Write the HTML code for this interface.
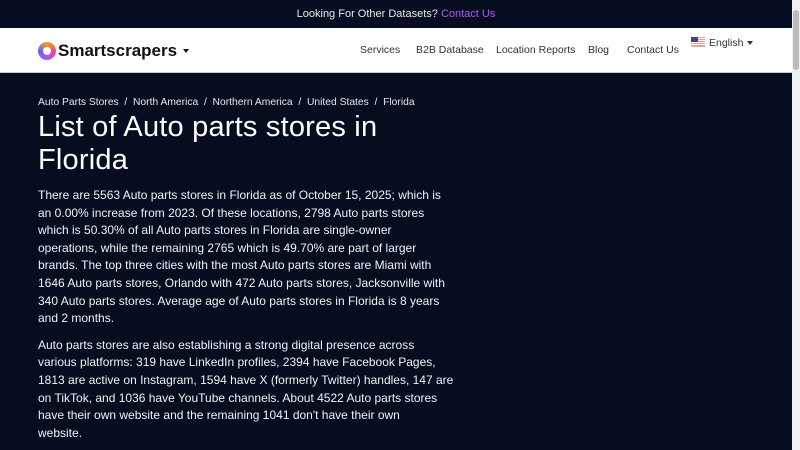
<!DOCTYPE html>
<html><head><meta charset="utf-8"><style>
*{margin:0;padding:0;box-sizing:border-box}
body{width:800px;height:450px;overflow:hidden;background:#070d20;font-family:"Liberation Sans",sans-serif;color:#fff;position:relative}
.top{height:28px;background:#070d20;text-align:center;font-size:11px;line-height:28px;color:#e8e8ee;padding-right:8px}
.top a{color:#a855f7;text-decoration:none}
.nav{position:absolute;top:28px;left:0;width:792px;height:45px;background:#fff;border-bottom:1px solid #ccc}
.logo{position:absolute;left:38px;top:13px;display:flex;align-items:center;color:#111;font-weight:bold;font-size:17px}
.ring{width:18px;height:18px;border-radius:50%;background:conic-gradient(#f59e0b,#ec4899,#a855f7,#6366f1,#f59e0b);position:relative;margin-right:2px}
.ring:after{content:"";position:absolute;left:5px;top:5px;width:8px;height:8px;border-radius:50%;background:#fff}
.nav .l{position:absolute;top:16px;font-size:10.5px;color:#333}
.car{display:inline-block;border-left:3.5px solid transparent;border-right:3.5px solid transparent;border-top:4px solid #333;vertical-align:middle;margin-left:4px}
.main{position:absolute;left:38px;top:97px;width:416px}
.bc{font-size:10.3px;color:#e5e7eb}
h1{font-weight:normal;font-size:29px;line-height:33px;margin-top:3px;letter-spacing:.2px}
p{font-size:12px;line-height:17.6px;margin-top:10px;color:#f1f1f4}
p+p{margin-top:9px}
.sb{position:absolute;right:0;top:0;width:8px;height:450px;background:#f0f0f0}
.sb div{margin:10px 1px;height:60px;background:#bbb;border-radius:3px}
</style></head><body>
<div class="top">Looking For Other Datasets? <a>Contact Us</a></div>
<div class="nav">
<div class="logo"><div class="ring"></div>Smartscrapers<span class="car" style="border-top-color:#111;margin-left:6px"></span></div>
<span class="l" style="left:360px">Services</span>
<span class="l" style="left:416px">B2B Database</span>
<span class="l" style="left:496px">Location Reports</span>
<span class="l" style="left:588px">Blog</span>
<span class="l" style="left:627px">Contact Us</span>
<span class="l" style="left:691px;top:9px"><svg width="14" height="10" style="vertical-align:-1px;margin-right:4px"><rect width="14" height="10" fill="#e8a0a0"/><rect y="1" width="14" height="1" fill="#fff"/><rect y="3" width="14" height="1" fill="#fff"/><rect y="5" width="14" height="1" fill="#fff"/><rect y="7" width="14" height="1" fill="#fff"/><rect width="7" height="5" fill="#3c4a80"/></svg>English<span class="car"></span></span>
</div>
<div class="main">
<div class="bc">Auto Parts Stores &nbsp;/&nbsp; North America &nbsp;/&nbsp; Northern America &nbsp;/&nbsp; United States &nbsp;/&nbsp; Florida</div>
<h1>List of Auto parts stores in Florida</h1>
<p>There are 5563 Auto parts stores in Florida as of October 15, 2025; which is an 0.00% increase from 2023. Of these locations, 2798 Auto parts stores which is 50.30% of all Auto parts stores in Florida are single-owner operations, while the remaining 2765 which is 49.70% are part of larger brands. The top three cities with the most Auto parts stores are Miami with 1646 Auto parts stores, Orlando with 472 Auto parts stores, Jacksonville with 340 Auto parts stores. Average age of Auto parts stores in Florida is 8 years and 2 months.</p>
<p>Auto parts stores are also establishing a strong digital presence across various platforms: 319 have LinkedIn profiles, 2394 have Facebook Pages, 1813 are active on Instagram, 1594 have X (formerly Twitter) handles, 147 are on TikTok, and 1036 have YouTube channels. About 4522 Auto parts stores have their own website and the remaining 1041 don't have their own<br>website.</p>
</div>
<div class="sb"><div></div></div>
</body></html>
